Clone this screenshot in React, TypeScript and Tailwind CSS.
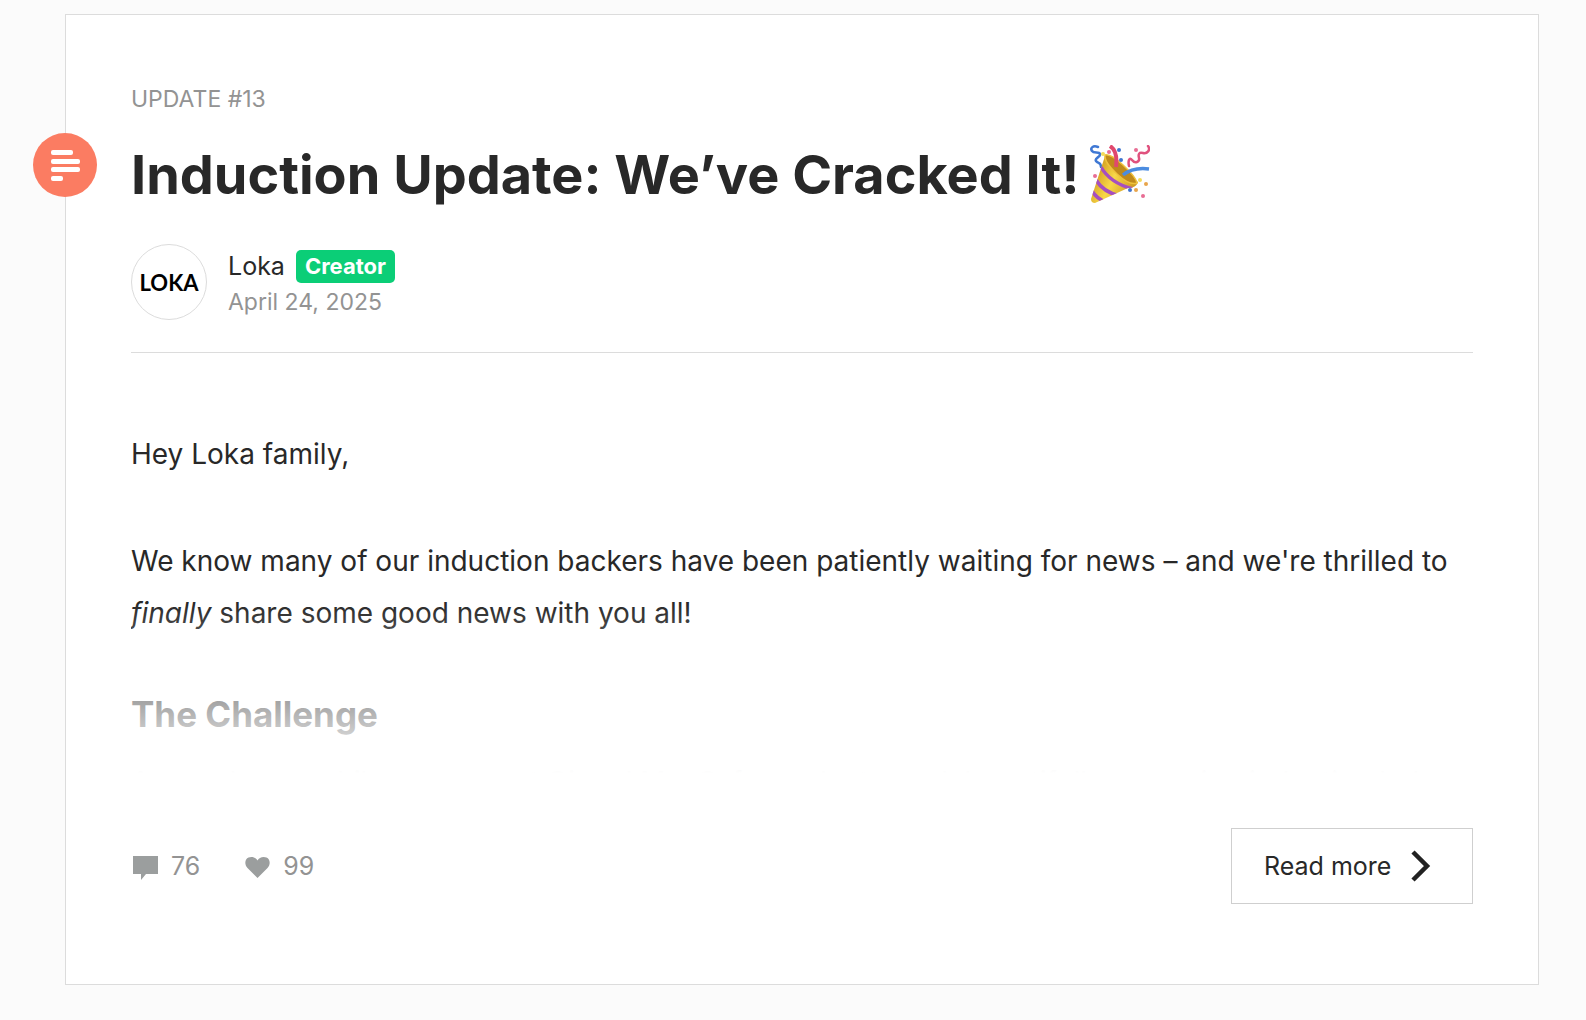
const STATS = [
  { label: "comments", count: 76, box: "0 0 26 26", path: "M0 1h25v18H13l-5 6v-6H0z" },
  {
    label: "likes",
    count: 99,
    box: "0 0 26 26",
    path: "M12.500 23 2.500 13C-1 9 0 4 3.500 2.500 7 1 11 2.500 12.500 5.500 14 2.500 18 1 21.500 2.500 25 4 26 9 22.500 13z",
  },
];

function PartyPopper() {
  return (
    <svg viewBox="0 0 60 60" className="h-15 w-15 shrink-0" role="img" aria-label="Party popper">
      <defs>
        <linearGradient id="cone" x1="0" y1="0.300" x2="1" y2="0.800">
          <stop offset="0" stopColor="#c98f16" />
          <stop offset="0.450" stopColor="#f8d848" />
          <stop offset="1" stopColor="#c48a18" />
        </linearGradient>
        <clipPath id="coneClip">
          <path d="M15 11 48 37Q46 43 38 43L5 58Q1 58 1 54z" />
        </clipPath>
      </defs>
      <g fill="none" strokeLinecap="round">
        <path d="M8 2C3 0 0 3 2 6s7 0 8 3-6 4-4 7 5 1 5 6" stroke="#3f78d4" strokeWidth="2.500" />
        <path d="M58 1c3 4-1 8-5 7s-5 1-4 5-4 6-7 2-4 2-3 6" stroke="#e0527e" strokeWidth="2.500" />
      </g>
      <path d="M15 11 48 37Q46 43 38 43L5 58Q1 58 1 54z" fill="url(#cone)" />
      <g clipPath="url(#coneClip)" fill="none" stroke="#a64fc0" strokeWidth="3.500">
        <path d="M11 22Q20 38 43 44" />
        <path d="M6 35Q13 47 30 51" />
        <path d="M2 46Q7 54 16 57" />
      </g>
      <path d="M15 10Q20 8 33 20T47 38Q40 41 27 29T15 10z" fill="#c08a1c" stroke="#efc23d" strokeWidth="1.500" />
      <path d="M20 1q8 5 6 21" fill="none" stroke="#e0486e" strokeWidth="4" />
      <path d="M33 30q10-8 26-6" fill="none" stroke="#4b8ce0" strokeWidth="3.500" />
      <g fill="#3f75d0">
        <circle cx="29" cy="5" r="2" />
        <circle cx="31" cy="15" r="2" />
        <circle cx="40" cy="45" r="2" />
      </g>
      <g fill="#e86d94">
        <circle cx="5" cy="31" r="2" />
        <circle cx="19" cy="7" r="2" />
        <circle cx="46" cy="5" r="2" />
        <circle cx="53" cy="51" r="2" />
      </g>
      <g fill="#e8a54c">
        <circle cx="46" cy="45" r="2" />
        <circle cx="56" cy="39" r="2" />
      </g>
      <g fill="#f2dc5c">
        <circle cx="13" cy="9" r="2" />
        <circle cx="50" cy="35" r="2" />
      </g>
    </svg>
  );
}

export default function App() {
  return (
    <main className="min-h-screen bg-[#fbfbfb] pt-[14px] pr-[47px] pb-9 pl-[65px] font-['Inter',sans-serif] text-[#282828]">
      <article className="relative border border-[#dcdcdc] bg-white px-[65px] pt-[66px] pb-20">
        <span className="absolute top-[118px] -left-[33px] flex size-16 items-center justify-center rounded-full bg-[#fb7c62]">
          <svg viewBox="0 0 30 32" className="h-8 w-[30px]" fill="#fff" aria-hidden="true">
            <rect x="1" y="1" width="22" height="5" rx="2" />
            <rect x="1" y="10" width="29" height="5" rx="2" />
            <rect x="1" y="18" width="29" height="5" rx="2" />
            <rect x="1" y="27" width="12" height="5" rx="2" />
          </svg>
        </span>

        <header className="border-b border-[#dcdcdc] pb-8">
          <p className="text-[23px] leading-9 text-[#939393]">UPDATE #13</p>
          <h1 className="mt-6 flex items-center gap-2.5 text-[54px] leading-[68px] font-bold">
            Induction Update: We’ve Cracked It!
            <PartyPopper />
          </h1>
          <div className="mt-[35px] flex items-center gap-[21px]">
            <div className="flex size-[76px] items-center justify-center rounded-full border border-[#dcdcdc] font-['Lato',sans-serif] text-[22px] font-bold text-black">
              LOKA
            </div>
            <div>
              <div className="flex items-center gap-[11px] pt-1">
                <a href="#loka" className="text-[25px] leading-9">
                  Loka
                </a>
                <span className="rounded-[5px] bg-[#0bce77] px-[9px] text-[22px] leading-[33px] font-bold text-white">
                  Creator
                </span>
              </div>
              <p className="text-[23px] leading-9 text-[#939393]">April 24, 2025</p>
            </div>
          </div>
        </header>

        <div className="relative h-[420px] overflow-hidden pt-[75px] text-[28px] leading-[52px]">
          <p>Hey Loka family,</p>
          <p className="mt-[55px]">
            We know many of our induction backers have been patiently waiting for news – and we're thrilled to{" "}
            <em>finally</em> share some good news with you all!
          </p>
          <h2 className="mt-[49px] text-[35px] font-bold">The Challenge</h2>
          <p className="mt-4">
            As you know, while our current Qi and MagSafe products work beautifully, powering induction hobs is a
            whole new task
          </p>
          <div className="absolute inset-x-0 bottom-0 h-[170px] bg-linear-to-b from-white/0 to-white" />
        </div>

        <footer className="mt-[55px] flex items-center justify-between">
          <div className="flex items-center gap-[45px] pl-[2px] text-[25px] leading-9 text-[#939393]">
            {STATS.map((stat) => (
              <span key={stat.label} className="flex items-center gap-3">
                <svg viewBox={stat.box} className="mt-1 size-[26px]" fill="#9b9e9e" role="img" aria-label={stat.label}>
                  <path d={stat.path} />
                </svg>
                {stat.count}
              </span>
            ))}
          </div>
          <button className="flex h-[76px] w-[242px] items-center gap-5 border border-[#cfcfcf] bg-white pl-8 text-[25px] leading-9">
            Read more
            <svg viewBox="0 0 20 32" className="h-8 w-5" fill="none" stroke="#222" strokeWidth="4.500" aria-hidden="true">
              <path d="m2 2 14 14L2 30" />
            </svg>
          </button>
        </footer>
      </article>
    </main>
  );
}
